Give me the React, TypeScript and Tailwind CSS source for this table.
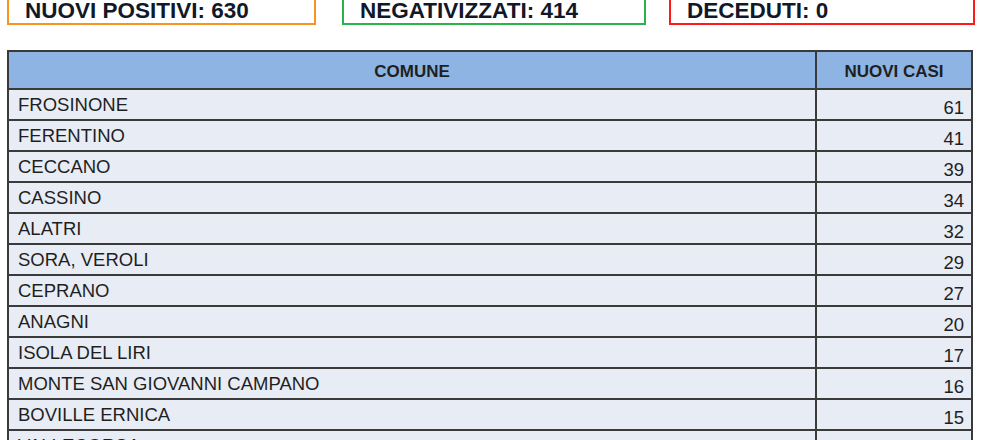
import React from 'react';

const rows: [string, number][] = [
  ['FROSINONE', 61],
  ['FERENTINO', 41],
  ['CECCANO', 39],
  ['CASSINO', 34],
  ['ALATRI', 32],
  ['SORA, VEROLI', 29],
  ['CEPRANO', 27],
  ['ANAGNI', 20],
  ['ISOLA DEL LIRI', 17],
  ['MONTE SAN GIOVANNI CAMPANO', 16],
  ['BOVILLE ERNICA', 15],
  ['VALLECORSA', 14],
  ['ARPINO', 12],
];

const StatBox: React.FC<{ label: string; border: string; width: string }> = ({ label, border, width }) => (
  <div className={`${width} ${border} border-2 pl-4 pt-[9px] leading-[25px] text-[22.5px] font-bold text-[#111827]`}>
    {label}
  </div>
);

export default function App() {
  return (
    <div className="w-[990px] h-[440px] overflow-hidden bg-white font-['Liberation_Sans',Arial,sans-serif]">
      {/* counters */}
      <div className="flex -mt-[13px] ml-[7px]">
        <StatBox label="NUOVI POSITIVI: 630" border="border-[#f7941d]" width="w-[309px]" />
        <div className="ml-[26px]">
          <StatBox label="NEGATIVIZZATI: 414" border="border-[#2bb34a]" width="w-[304px]" />
        </div>
        <div className="ml-[23px]">
          <StatBox label="DECEDUTI: 0" border="border-[#ff1a1a]" width="w-[306px]" />
        </div>
      </div>

      {/* table */}
      <div className="mt-[25px] ml-[7px] w-[966px] border-2 border-b-0 border-[#3a3a3a] text-[#1f1f1f]">
        <div className="flex h-[38px] bg-[#8db4e2] border-b-2 border-[#3a3a3a] text-[17px] font-bold">
          <div className="w-[808px] border-r-2 border-[#3a3a3a] flex items-center justify-center pt-[3px]">COMUNE</div>
          <div className="flex-1 flex items-center justify-center pt-[3px]">NUOVI CASI</div>
        </div>
        {rows.map(([name, n]) => (
          <div key={name} className="flex h-[31px] bg-[#e8ecf4] border-b-2 border-[#3a3a3a]">
            <div className="w-[808px] border-r-2 border-[#3a3a3a] flex items-center pl-[9px] text-[18.5px] leading-[22px]">
              {name}
            </div>
            <div className="flex-1 flex items-end justify-end pr-[7px] text-[18.5px] leading-[22px]">
              {n}
            </div>
          </div>
        ))}
      </div>
    </div>
  );
}
